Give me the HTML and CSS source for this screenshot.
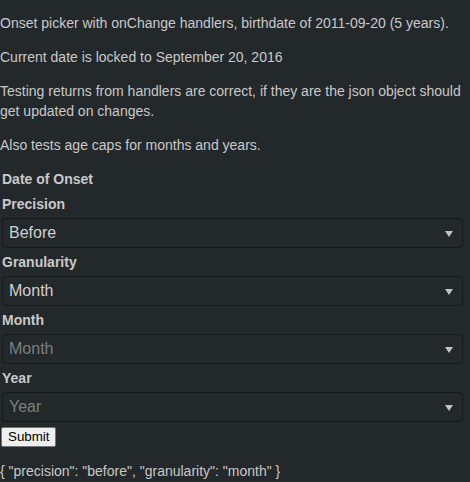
FILE: index.html
```html
<!DOCTYPE html>
<html>
<head>
<meta charset="utf-8">
<link rel="stylesheet" href="styles.css">
</head>
<body>
<div class="page">
  <p class="text">Onset picker with onChange handlers, birthdate of 2011-09-20 (5 years).</p>
  <p class="text">Current date is locked to September 20, 2016</p>
  <p class="text">Testing returns from handlers are correct, if they are the json object should get updated on changes.</p>
  <p class="text">Also tests age caps for months and years.</p>
  <form class="form">
    <div class="title">Date of Onset</div>
    <div class="field">
      <label class="label">Precision</label>
      <div class="select"><span class="value">Before</span><span class="arrow"></span></div>
    </div>
    <div class="field">
      <label class="label">Granularity</label>
      <div class="select"><span class="value">Month</span><span class="arrow"></span></div>
    </div>
    <div class="field">
      <label class="label">Month</label>
      <div class="select"><span class="value placeholder">Month</span><span class="arrow"></span></div>
    </div>
    <div class="field">
      <label class="label">Year</label>
      <div class="select"><span class="value placeholder">Year</span><span class="arrow"></span></div>
    </div>
  </form>
  <button class="submit" type="button">Submit</button>
  <p class="text result">{ "precision": "before", "granularity": "month" }</p>
</div>
</body>
</html>
```

FILE: styles.css
```css
html, body {
  margin: 0;
  padding: 0;
  background: #23282b;
}
.page {
  font-family: "Liberation Sans", Arial, sans-serif;
  font-size: 14px;
  line-height: 20px;
  color: #c9c9c9;
  padding-top: 0;
}
.text {
  margin: 13px 0 14px 0;
}
.result {
  margin-top: 14px;
}
.form {
  padding-left: 2px;
  margin: 0;
}
.title {
  font-weight: bold;
  margin-bottom: 5px;
}
.field {
  margin-bottom: 4px;
}
.label {
  display: block;
  font-weight: bold;
  margin-bottom: 4px;
}
.select {
  box-sizing: border-box;
  width: 461px;
  height: 30px;
  border: 1px solid #16191b;
  border-radius: 4px;
  background: #23282b;
  display: flex;
  align-items: center;
  justify-content: space-between;
  padding: 0 9px 0 6px;
  font-size: 16px;
}
.value {
  color: #cfcfcf;
}
.placeholder {
  color: #7c7f82;
}
.arrow {
  width: 0;
  height: 0;
  border-left: 4.5px solid transparent;
  border-right: 4.5px solid transparent;
  border-top: 6px solid #c2c2c2;
  margin-top: 1px;
}
.submit {
  display: block;
  margin: 5px 0 0 1px;
  padding: 1px 6px;
  height: 20px;
  font-family: "Liberation Sans", Arial, sans-serif;
  font-size: 13.333px;
  line-height: 16px;
  color: #000;
  background: #efefef;
  border: 1px solid #767676;
  border-radius: 2px;
}
```
